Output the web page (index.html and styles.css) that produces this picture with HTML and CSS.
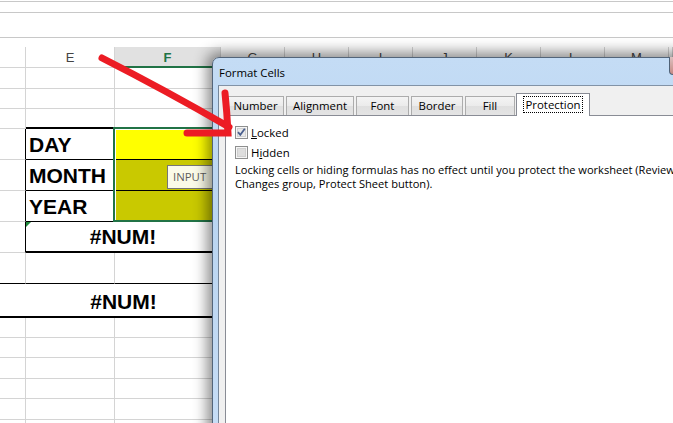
FILE: index.html
```html
<!DOCTYPE html>
<html lang="en">
<head>
<meta charset="UTF-8">
<title>Format Cells - Protection</title>
<link rel="stylesheet" href="styles.css">
</head>
<body>
<div class="screen">

  <div class="bar bar-1"></div>
  <div class="bar bar-2"></div>
  <div class="bar bar-3"></div>

  <div class="sheet">
    <div class="row head">
      <div class="cd"></div>
      <div class="ce">E</div>
      <div class="cf active">F</div>
      <div class="cg">G</div>
      <div class="cg">H</div>
      <div class="cg">I</div>
      <div class="cg">J</div>
      <div class="cg">K</div>
      <div class="cg">L</div>
      <div class="cg">M</div>
      <div class="rest"></div>
    </div>
    <div class="row wide"><div class="cd"></div><div class="ce"></div><div class="cf"></div><div class="rest"></div></div>
    <div class="row"><div class="cd"></div><div class="ce"></div><div class="cf"></div><div class="rest"></div></div>
    <div class="row"><div class="cd"></div><div class="ce top"></div><div class="cf"></div><div class="rest"></div></div>
    <div class="row tall">
      <div class="cd edge"></div>
      <div class="ce lbl">DAY</div>
      <div class="cf day"></div>
      <div class="rest"></div>
    </div>
    <div class="row tall">
      <div class="cd edge"></div>
      <div class="ce lbl">MONTH</div>
      <div class="cf pick"></div>
      <div class="rest"></div>
    </div>
    <div class="row tall">
      <div class="cd edge"></div>
      <div class="ce lbl">YEAR</div>
      <div class="cf pick"></div>
      <div class="rest"></div>
    </div>
    <div class="row tall">
      <div class="cd edge"></div>
      <div class="merged result err">#NUM!</div>
      <div class="rest"></div>
    </div>
    <div class="row tall">
      <div class="cd under"></div>
      <div class="ce under"></div>
      <div class="cf under"></div>
      <div class="rest"></div>
    </div>
    <div class="row big">
      <div class="cd open"></div>
      <div class="merged result open">#NUM!</div>
      <div class="rest"></div>
    </div>
    <div class="row"><div class="cd"></div><div class="ce"></div><div class="cf"></div><div class="rest"></div></div>
    <div class="row"><div class="cd"></div><div class="ce"></div><div class="cf"></div><div class="rest"></div></div>
    <div class="row wide"><div class="cd"></div><div class="ce"></div><div class="cf"></div><div class="rest"></div></div>
    <div class="row"><div class="cd"></div><div class="ce"></div><div class="cf"></div><div class="rest"></div></div>
    <div class="row wide"><div class="cd"></div><div class="ce"></div><div class="cf"></div><div class="rest"></div></div>
    <div class="row"><div class="cd"></div><div class="ce"></div><div class="cf"></div><div class="rest"></div></div>

    <div class="selection"></div>
    <div class="tip">INPUT</div>
  </div>

  <div class="dialog">
    <div class="title">Format Cells</div>
    <div class="close"></div>
    <div class="client">
      <div class="tabs">
        <div class="tab t-number">Number</div>
        <div class="tab t-align">Alignment</div>
        <div class="tab t-font">Font</div>
        <div class="tab t-border">Border</div>
        <div class="tab t-fill">Fill</div>
        <div class="tab selected"><span class="focus">Protection</span></div>
      </div>
      <div class="panel">
        <div class="check">
          <svg class="box" width="13" height="13" viewBox="0 0 13 13">
            <rect x="0.5" y="0.5" width="12" height="12" fill="#f6f6f6" stroke="#8e8f8f"/>
            <rect x="2.5" y="2.5" width="8" height="8" fill="#e9e9e9" stroke="#d0d0d0"/>
            <path d="M3 6.2 L5.3 8.8 L9.8 2.8" fill="none" stroke="#4a5f8e" stroke-width="1.8"/>
          </svg>
          <span><u>L</u>ocked</span>
        </div>
        <div class="check">
          <svg class="box" width="13" height="13" viewBox="0 0 13 13">
            <rect x="0.5" y="0.5" width="12" height="12" fill="#f6f6f6" stroke="#8e8f8f"/>
            <rect x="2.5" y="2.5" width="8" height="8" fill="#dedede" stroke="#cfcfcf"/>
          </svg>
          <span>H<u>i</u>dden</span>
        </div>
        <p class="note">Locking cells or hiding formulas has no effect until you protect the worksheet (Review tab,<br>Changes group, Protect Sheet button).</p>
      </div>
    </div>
  </div>

  <svg class="arrow" width="673" height="423" viewBox="0 0 673 423">
    <path d="M102 58 Q165 90 229 127" fill="none" stroke="#ec1c24" stroke-width="7" stroke-linecap="round"/>
    <path d="M225 93 Q227 112 228 133 L187 133" fill="none" stroke="#ec1c24" stroke-width="7" stroke-linecap="round"/>
  </svg>

</div>
</body>
</html>
```

FILE: styles.css
```css
html, body {
  margin: 0;
  padding: 0;
  background-color: white;
  overflow: hidden;
}
.screen {
  position: relative;
  width: 673px;
  height: 423px;
  overflow: hidden;
  font-family: "Liberation Sans", Arial, sans-serif;
}

/* ribbon / formula bar edges */
.bar {
  border-bottom: 1px solid #c8c8c8;
}
.bar-1 { height: 1px; }
.bar-2 { height: 10px; }
.bar-3 { height: 24px; margin-bottom: 9px; }

/* worksheet */
.sheet {
  position: relative;
}
.row {
  display: flex;
  height: 20px;
}
.row.wide { height: 21px; }
.row.tall { height: 31px; }
.row.big { height: 34px; }
.row > div {
  box-sizing: border-box;
  flex: none;
  border-right: 1px solid #d4d4d4;
  border-bottom: 1px solid #d4d4d4;
}
.row > .rest {
  flex: 1;
}
.cd { width: 26px; }
.ce { width: 89px; }
.cf { width: 106px; }
.cg { width: 64px; }
.merged { width: 195px; }

.head {
  height: 21px;
  font-size: 13px;
  color: #444;
  text-align: center;
  line-height: 22px;
}
.head .active {
  background-color: #e1e1e1;
  color: #217346;
  font-weight: bold;
  border-bottom: 2px solid #217346;
}

.ce.top { border-bottom: 2px solid #000; }
.cd.edge { border-right-color: #000; }
.lbl, .result {
  font-size: 21px;
  font-weight: bold;
  color: #000;
  display: flex;
  align-items: flex-end;
  padding-bottom: 2px;
}
.lbl {
  padding-left: 3px;
  border-bottom-color: #000 !important;
}
.day {
  background-color: #ffff00;
  border-bottom-color: #000 !important;
}
.pick {
  background-color: #c9c900;
  border-bottom-color: #000 !important;
}
.result {
  justify-content: center;
  position: relative;
  border-bottom: 2px solid #000 !important;
}
.err::before {
  content: "";
  position: absolute;
  left: 0;
  top: 0;
  border-top: 5px solid #1f8a3c;
  border-right: 5px solid transparent;
}
.under { border-bottom-color: #000 !important; }
.open {
  border-right: none !important;
  border-bottom: 2px solid #000 !important;
}

.selection {
  position: absolute;
  left: 113px;
  top: 80px;
  width: 104px;
  height: 91px;
  border: 2px solid #217346;
  box-shadow: inset 1px 1px 0 #fff;
}
.tip {
  position: absolute;
  left: 167px;
  top: 118px;
  width: 60px;
  height: 22px;
  border: 1px solid #767676;
  background-color: #fbfbe8;
  color: #5e5e5e;
  font-family: "Open Sans", sans-serif;
  font-size: 11.4px;
  line-height: 22px;
  padding-left: 5px;
}

/* Format Cells dialog */
.dialog {
  position: absolute;
  left: 212px;
  top: 57px;
  width: 520px;
  height: 400px;
  box-sizing: border-box;
  border: 1px solid #53657a;
  border-radius: 7px 7px 0 0;
  background: linear-gradient(#c4dcf5, #bad5f1 40%, #c8def6 100%);
  box-shadow: 0 0 14px 5px rgba(0,0,0,0.45);
  padding: 0 5px;
  font-family: "Open Sans", sans-serif;
  font-size: 11.1px;
  color: #000;
}
.title {
  height: 27px;
  line-height: 29px;
  padding-left: 1px;
  font-size: 11.4px;
}
.close {
  position: absolute;
  left: 456px;
  top: -1px;
  width: 44px;
  height: 17px;
  border: 1px solid #4f6176;
  border-top: none;
  border-radius: 0 0 4px 4px;
  background: linear-gradient(#dcc0c0, #c58a84);
}
.client {
  height: 100%;
  border-top: 1px solid #8293a6;
  border-left: 1px solid #75869a;
  background-color: #f0f0f0;
  padding-left: 6px;
}
.tabs {
  display: flex;
  align-items: flex-end;
  height: 22px;
  margin-top: 7px;
  padding-left: 2px;
  font-size: 11.4px;
}
.tab {
  box-sizing: border-box;
  height: 19px;
  line-height: 17px;
  text-align: center;
  border: 1px solid #acacac;
  border-bottom: none;
  background: linear-gradient(#f4f4f4, #ebebeb 50%, #dfdfdf 51%, #e4e4e4);
  margin-right: 2px;
}
.t-number { width: 57px; }
.t-align { width: 68px; }
.t-font { width: 53px; }
.t-border { width: 52px; }
.t-fill { width: 50px; margin-right: 1px; }
.tab.selected {
  position: relative;
  z-index: 1;
  width: 74px;
  height: 23px;
  margin-bottom: -1px;
  background: #fff;
  border-color: #898c95;
  padding-top: 4px;
  line-height: 14px;
}
.focus {
  outline: 1px dotted #000;
  padding: 0 1px;
}
.panel {
  height: 100%;
  background-color: #fff;
  border-top: 1px solid #898c95;
  border-left: 1px solid #898c95;
  padding: 6px 0 0 9px;
}
.check {
  display: flex;
  align-items: center;
  height: 20px;
  font-size: 11.4px;
}
.box {
  margin-right: 3px;
}
.note {
  margin: 1px 0 0;
  line-height: 14px;
  white-space: nowrap;
}

.arrow {
  position: absolute;
  left: 0;
  top: 0;
  z-index: 5;
}
```
